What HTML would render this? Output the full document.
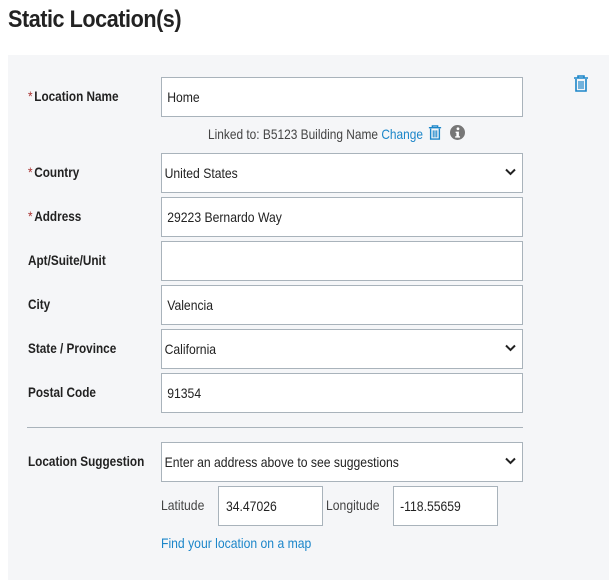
<!DOCTYPE html>
<html><head><style>
body{margin:0;width:609px;height:583px;background:#fff;font-family:"Liberation Sans",sans-serif;color:#222;position:relative;overflow:hidden}
.a{position:absolute}
.n{display:inline-block;transform:scaleX(.87);transform-origin:0 0;white-space:nowrap}
.lbl .n{transform:scaleX(.84)}
h1{position:absolute;left:8px;top:6px;margin:0;font:bold 24px "Liberation Sans",sans-serif;color:#222;letter-spacing:-0.5px;transform:scaleX(.9);transform-origin:0 0;white-space:nowrap}
.panel{position:absolute;left:8px;top:55px;width:601px;height:525px;background:#f5f6f8}
.lbl{position:absolute;left:28px;font-weight:bold;font-size:14px;color:#222}
.star{color:#a33;margin-right:2px;font-weight:normal}
.in{position:absolute;left:161px;width:360px;height:38px;background:#fff;border:1px solid #a9b3bb;font-size:14px;line-height:38px;box-sizing:content-box}
.in .n{padding-left:6px}
.chev{position:absolute;right:6px;top:14px}
.t{font-size:14px}
</style></head><body>
<h1>Static Location(s)</h1>
<div class="panel"></div>
<svg class="a" style="left:573px;top:75px" width="16" height="17" viewBox="0 0 16 17"><path d="M1 3h14M5 3V1h6v2M3 4v12h10V4" fill="none" stroke="#1c86c9" stroke-width="1.6"/><path d="M6 6v8M8 6v8M10 6v8" stroke="#1c86c9" stroke-width="1.2"/></svg>

<div class="lbl" style="top:88px"><span class="n"><span class="star">*</span>Location Name</span></div>
<div class="in" style="top:77px"><span class="n">Home</span></div>
<div class="a t" style="left:208px;top:126px;color:#444"><span class="n" style="transform:scaleX(.85)">Linked to: B5123 Building Name <span style="color:#1c86c9">Change</span></span></div>
<svg class="a" style="left:428px;top:125px" width="14" height="15" viewBox="0 0 16 17"><path d="M1 3h14M5 3V1h6v2M3 4v12h10V4" fill="none" stroke="#1c86c9" stroke-width="1.6"/><path d="M6 6v8M8 6v8M10 6v8" stroke="#1c86c9" stroke-width="1.2"/></svg>
<svg class="a" style="left:450px;top:125px" width="15" height="15" viewBox="0 0 16 16"><circle cx="8" cy="8" r="8" fill="#777"/><circle cx="8.5" cy="4" r="1.5" fill="#fff"/><path d="M6 7h3.5v5h1.2v1.5H5.5V12h1.3V8.5H6z" fill="#fff"/></svg>

<div class="lbl" style="top:164px"><span class="n"><span class="star">*</span>Country</span></div>
<div class="in" style="top:153px"><span class="n" style="padding-left:3px">United States</span><svg class="chev" width="11" height="8" viewBox="0 0 11 8"><path d="M1 1.5l4.5 4.5 4.5-4.5" fill="none" stroke="#222" stroke-width="2"/></svg></div>
<div class="lbl" style="top:208px"><span class="n"><span class="star">*</span>Address</span></div>
<div class="in" style="top:197px"><span class="n">29223 Bernardo Way</span></div>
<div class="lbl" style="top:252px"><span class="n">Apt/Suite/Unit</span></div>
<div class="in" style="top:241px"></div>
<div class="lbl" style="top:296px"><span class="n">City</span></div>
<div class="in" style="top:285px"><span class="n">Valencia</span></div>
<div class="lbl" style="top:340px"><span class="n">State / Province</span></div>
<div class="in" style="top:329px"><span class="n" style="padding-left:3px">California</span><svg class="chev" width="11" height="8" viewBox="0 0 11 8"><path d="M1 1.5l4.5 4.5 4.5-4.5" fill="none" stroke="#222" stroke-width="2"/></svg></div>
<div class="lbl" style="top:384px"><span class="n">Postal Code</span></div>
<div class="in" style="top:373px"><span class="n">91354</span></div>
<div class="a" style="left:27px;top:427px;width:496px;height:1px;background:#a9b3bb"></div>
<div class="lbl" style="top:453px"><span class="n">Location Suggestion</span></div>
<div class="in" style="top:442px"><span class="n" style="padding-left:3px">Enter an address above to see suggestions</span><svg class="chev" width="11" height="8" viewBox="0 0 11 8"><path d="M1 1.5l4.5 4.5 4.5-4.5" fill="none" stroke="#222" stroke-width="2"/></svg></div>
<div class="a t" style="left:161px;top:497px;color:#444"><span class="n">Latitude</span></div>
<div class="in" style="top:486px;left:218px;width:103px"><span class="n" style="padding-left:8px">34.47026</span></div>
<div class="a t" style="left:326px;top:497px;color:#444"><span class="n">Longitude</span></div>
<div class="in" style="top:486px;left:393px;width:103px"><span class="n" style="padding-left:7px">-118.55659</span></div>
<div class="a t" style="left:161px;top:535px;color:#1c86c9"><span class="n">Find your location on a map</span></div>
</body></html>
